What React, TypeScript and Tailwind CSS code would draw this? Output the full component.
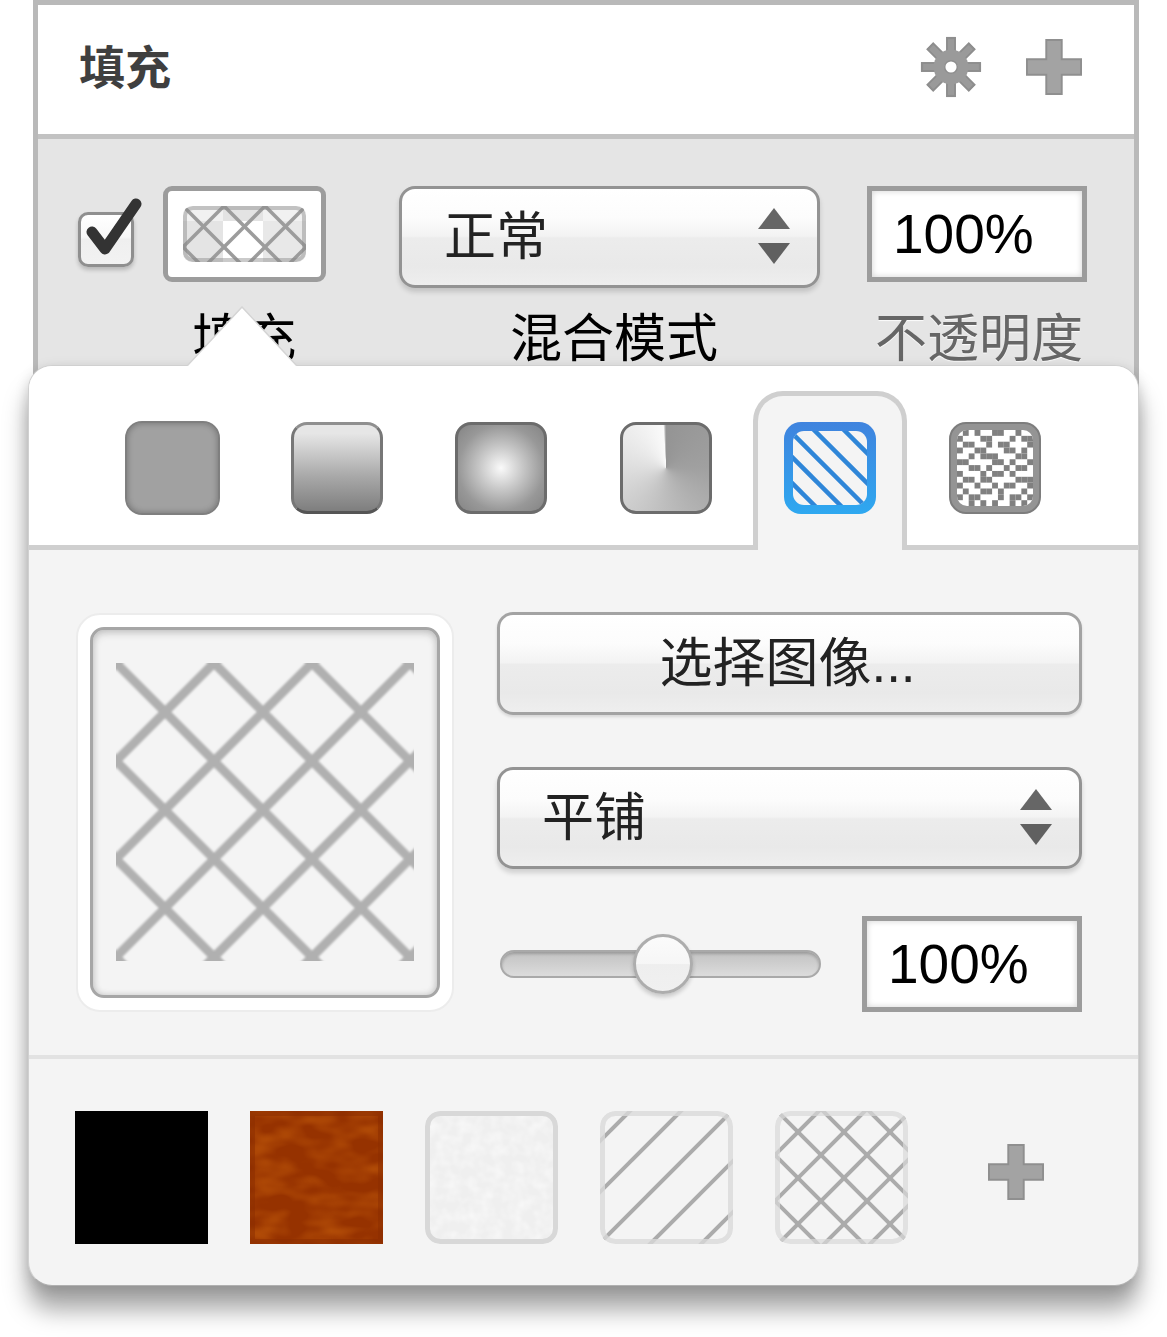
import React from "react"

const cjk = "font-['Liberation_Sans','Noto_Sans_CJK_SC',sans-serif]"
const gloss =
  "bg-[linear-gradient(#ffffff_0%,#fcfcfc_30%,#f3f3f3_49%,#ececec_51%,#e9e9e9_80%,#eeeeee_100%)]"

// 下面几块都是图案，用 svg 画
function Lines({ tile, width, height, w, color }: { tile: number; width: number; height: number; w: number; color: string }) {
  const items = []
  const max = Math.ceil((width + height) / tile) + 2
  for (let k = -max; k <= max; k++) {
    items.push(<line key={"a" + k} x1={tile * k - 10} y1={-10} x2={tile * k + height + 10} y2={height + 10} stroke={color} strokeWidth={w} />)
    items.push(<line key={"b" + k} x1={tile * k + 10} y1={-10} x2={tile * k - height - 10} y2={height + 10} stroke={color} strokeWidth={w} />)
  }
  return <>{items}</>
}

function Plus({ className }: { className?: string }) {
  return (
    <svg viewBox="0 0 58 58" className={className}>
      <path d="M21 1h16v20h20v16H37v20H21V37H1V21h20z" fill="#a3a3a3" stroke="#8f8f8f" strokeWidth="2" />
    </svg>
  )
}

function Gear() {
  const teeth = [0, 45, 90, 135, 180, 225, 270, 315]
  return (
    <svg viewBox="0 0 64 64" className="w-[62px] h-[62px]">
      {teeth.map((r) => (
        <rect key={r} x="28" y="2" width="8" height="60" fill="#9a9a9a" stroke="#8e8e8e" strokeWidth="2" transform={`rotate(${r} 32 32)`} />
      ))}
      <circle cx="32" cy="32" r="18" fill="#9a9a9a" />
      {teeth.map((r) => (
        <rect key={"i" + r} x="29" y="4" width="6" height="56" fill="#9a9a9a" transform={`rotate(${r} 32 32)`} />
      ))}
      <circle cx="32" cy="32" r="6.5" fill="#fff" stroke="#8e8e8e" strokeWidth="1.5" />
    </svg>
  )
}

function Arrows({ className }: { className?: string }) {
  return (
    <svg viewBox="0 0 32 56" className={className}>
      <path d="M16 0l16 21H0z" fill="#666" />
      <path d="M0 35h32L16 56z" fill="#606060" />
    </svg>
  )
}

function Select({ label, className, pad, arrow }: { label: string; className: string; pad: string; arrow: string }) {
  return (
    <div className={`relative flex items-center border-[3px] border-[#939393] rounded-[16px] shadow-[0_4px_5px_rgba(0,0,0,0.15)] text-[52px] text-[#222] ${gloss} ${className} ${pad}`}>
      <span className="leading-none">{label}</span>
      <Arrows className={`absolute w-[32px] h-[56px] top-[19px] ${arrow}`} />
    </div>
  )
}

function Percent({ className }: { className: string }) {
  return (
    <div className={`flex items-center border-[5px] border-[#9c9c9c] bg-white shadow-[inset_0_0_6px_rgba(0,0,0,0.18)] text-[55px] text-black pl-[21px] ${className}`}>
      100%
    </div>
  )
}

function SmallSwatch() {
  return (
    <svg viewBox="0 0 123 56" className="w-[123px] h-[56px]">
      <defs>
        <clipPath id="sw">
          <rect width="123" height="56" rx="9" />
        </clipPath>
      </defs>
      <g clipPath="url(#sw)">
        <rect width="123" height="56" fill="#ececec" />
        <rect x="0" y="0" width="40" height="15" fill="#f1f1f1" />
        <rect x="40" y="15" width="40" height="41" fill="#ffffff" />
        <rect x="0" y="15" width="40" height="41" fill="#e4e4e4" />
        <rect x="40" y="0" width="40" height="15" fill="#e3e3e3" />
        <rect x="80" y="0" width="43" height="15" fill="#f1f1f1" />
        <rect x="80" y="15" width="43" height="41" fill="#e8e8e8" />
        <g className="blur-[0.6px]">
          <Lines tile={41} width={123} height={56} w={3.5} color="#9c9c9c" />
        </g>
        <rect x="2" y="2" width="119" height="52" rx="8" fill="none" stroke="#8a8a8a" strokeOpacity="0.45" strokeWidth="4" />
      </g>
    </svg>
  )
}

const noise = [
  "0101001100100",
  "1000110001011",
  "0110010110001",
  "1001100011010",
  "0010111000110",
  "1100001101001",
  "0011010010110",
  "1000101101000",
  "0110110000111",
  "1001001011001",
  "0100110100010",
  "1011000101101",
  "0010101001010",
]

function TabIcons() {
  return (
    <div className="flex items-start gap-[72px] pl-[96px] pt-[55px] relative">
      <div className="w-[95px] h-[94px] rounded-[17px] border-2 border-[#7f7f7f] bg-[#a1a1a1] shadow-[inset_0_0_6px_rgba(0,0,0,0.3)]" />
      <div className="w-[92px] h-[92px] mt-[1px] -ml-[1px] rounded-[16px] border-[3px] border-t-[#8f8f8f] border-x-[#777] border-b-[#555] bg-[linear-gradient(#e6e6e6_10%,#a8a8a8_60%,#7e7e7e_100%)]" />
      <div className="w-[92px] h-[92px] mt-[1px] rounded-[16px] border-[3px] border-[#6c6c6c] bg-[radial-gradient(circle_at_50%_50%,#fafafa_0%,#c8c8c8_35%,#989898_70%,#848484_100%)]" />
      <div className="w-[92px] h-[92px] mt-[1px] ml-[1px] rounded-[16px] border-[3px] border-[#6c6c6c] bg-[conic-gradient(#949494_0%,#a0a0a0_25%,#bdbdbd_50%,#dedede_75%,#fafafa_99%,#949494_100%)]" />
      <svg viewBox="0 0 92 92" className="w-[92px] h-[92px] mt-[1px]">
        <defs>
          <linearGradient id="blue" x1="0" y1="0" x2="0" y2="1">
            <stop offset="0" stopColor="#3f83de" />
            <stop offset="1" stopColor="#2ea8f0" />
          </linearGradient>
          <clipPath id="bi">
            <rect x="9" y="9" width="74" height="74" rx="11" />
          </clipPath>
        </defs>
        <rect width="92" height="92" rx="17" fill="url(#blue)" />
        <rect x="9" y="9" width="74" height="74" rx="11" fill="#f4f4f4" />
        <g clipPath="url(#bi)" stroke="#2f86d8" strokeWidth="4.5">
          <line x1="-20" y1="33" x2="80" y2="133" />
          <line x1="-20" y1="7" x2="80" y2="107" />
          <line x1="-20" y1="-17" x2="80" y2="83" />
          <line x1="15" y1="-7" x2="115" y2="93" />
          <line x1="45" y1="-7" x2="145" y2="93" />
        </g>
      </svg>
      <svg viewBox="0 0 92 92" className="w-[92px] h-[92px] mt-[1px] ml-[1px]">
        <defs>
          <clipPath id="ni">
            <rect x="8" y="8" width="76" height="76" rx="10" />
          </clipPath>
        </defs>
        <rect x="1" y="1" width="90" height="90" rx="16" fill="#949494" stroke="#7d7d7d" strokeWidth="2" />
        <g clipPath="url(#ni)">
          <rect x="8" y="8" width="76" height="76" fill="#fff" />
          {noise.map((row, y) =>
            row.split("").map((c, x) =>
              c === "1" ? <rect key={x + "-" + y} x={8 + x * 5.85} y={8 + y * 5.85} width="5.85" height="5.85" fill="#808080" /> : null
            )
          )}
        </g>
      </svg>
    </div>
  )
}

function OrangeSwatch() {
  return (
    <svg viewBox="0 0 133 133" className="w-[133px] h-[133px]">
      <defs>
        <filter id="wood" x="0" y="0" width="100%" height="100%" colorInterpolationFilters="sRGB">
          <feTurbulence type="fractalNoise" baseFrequency="0.03 0.06" numOctaves="2" seed="7" />
          <feColorMatrix values="0 0 0 0 0.71  0 0 0 0 0.31  0 0 0 0 0.03  2.2 0 0 0 -0.85" />
        </filter>
      </defs>
      <rect width="133" height="133" fill="#963200" />
      <rect width="133" height="133" filter="url(#wood)" />
      <rect x="2.5" y="2.5" width="128" height="128" fill="none" stroke="#8a2c00" strokeOpacity="0.5" strokeWidth="5" />
    </svg>
  )
}

function PaperSwatch() {
  return (
    <svg viewBox="0 0 133 133" className="w-[133px] h-[133px]">
      <defs>
        <filter id="paper" x="0" y="0" width="100%" height="100%">
          <feTurbulence type="fractalNoise" baseFrequency="0.09" numOctaves="2" seed="3" />
          <feColorMatrix values="0 0 0 0 1  0 0 0 0 1  0 0 0 0 1  1 0 0 0 -0.35" />
        </filter>
        <clipPath id="pc">
          <rect width="133" height="133" rx="15" />
        </clipPath>
      </defs>
      <g clipPath="url(#pc)">
        <rect width="133" height="133" fill="#efefef" />
        <rect width="133" height="133" filter="url(#paper)" />
        <rect x="2.5" y="2.5" width="128" height="128" rx="13" fill="none" stroke="#d8d8d8" strokeWidth="5" />
      </g>
    </svg>
  )
}

function DiagSwatch() {
  return (
    <svg viewBox="0 0 133 133" className="w-[133px] h-[133px]">
      <defs>
        <clipPath id="dc">
          <rect width="133" height="133" rx="15" />
        </clipPath>
      </defs>
      <g clipPath="url(#dc)">
        <g stroke="#ababab" strokeWidth="4" className="blur-[0.5px]">
          {[30, 81, 132, 183, 234].map((s) => (
            <line key={s} x1={s + 5} y1={-5} x2={s - 140} y2={140} />
          ))}
        </g>
        <rect x="2.5" y="2.5" width="128" height="128" rx="13" fill="none" stroke="#d9d9d9" strokeOpacity="0.8" strokeWidth="5" />
      </g>
    </svg>
  )
}

function MeshSwatch() {
  return (
    <svg viewBox="0 0 133 133" className="w-[133px] h-[133px]">
      <defs>
        <clipPath id="mc">
          <rect width="133" height="133" rx="15" />
        </clipPath>
      </defs>
      <g clipPath="url(#mc)">
        <g transform="translate(0 -2)" className="blur-[0.5px]">
          <Lines tile={46} width={133} height={137} w={4} color="#ababab" />
        </g>
        <rect x="2.5" y="2.5" width="128" height="128" rx="13" fill="none" stroke="#d9d9d9" strokeOpacity="0.7" strokeWidth="5" />
      </g>
    </svg>
  )
}

export default function App() {
  return (
    <div className={`relative w-[1167px] h-[1337px] overflow-hidden bg-white ${cjk}`}>
      <div className="ml-[33px] w-[1106px] border-x-[5px] border-t-[5px] border-[#b9b9b9]">
        {/* 标题栏 */}
        <header className="h-[134px] border-b-[5px] border-[#c2c2c2] flex items-center pl-[41px] pr-[52px]">
          <h1 className="text-[46px] -mt-[4px] leading-none font-bold text-[#3f3f3f]">填充</h1>
          <div className="ml-auto -mt-[5px] flex items-center gap-[44px]">
            <Gear />
            <Plus className="w-[56px] h-[56px]" />
          </div>
        </header>

        {/* 图层行 */}
        <section className="bg-[#e5e5e5] h-[300px] pt-[47px] pl-[40px] flex items-start text-[52px] leading-none">
          <div className="relative w-[56px] h-[55px] mt-[26px] rounded-[10px] border-[3px] border-[#8f8f8f] shadow-[0_3px_4px_rgba(0,0,0,0.2)] bg-[linear-gradient(#ffffff_0%,#f8f8f8_45%,#efefef_50%,#f2f2f2_100%)]">
            <svg viewBox="0 0 70 70" className="absolute -left-[3px] -top-[17px] w-[70px] h-[70px] overflow-visible">
              <path d="M14 34L27 51L58 6" fill="none" stroke="#333" strokeWidth="11" strokeLinecap="round" strokeLinejoin="round" />
            </svg>
          </div>
          <div className="ml-[29px] flex flex-col items-center">
            <div className="w-[163px] h-[96px] border-[5px] border-[#9c9c9c] rounded-[9px] bg-white flex items-center justify-center">
              <SmallSwatch />
            </div>
            <span className="mt-[31px] text-black">填充</span>
          </div>
          <div className="ml-[73px] flex flex-col items-center">
            <Select label="正常" className="w-[421px] h-[102px]" pad="pl-[42px]" arrow="right-[27px]" />
            <span className="mt-[25px] pl-[9px] text-black">混合模式</span>
          </div>
          <div className="ml-[47px] flex flex-col items-center">
            <Percent className="w-[220px] h-[96px]" />
            <span className="mt-[31px] pl-[4px] text-[#666] [text-shadow:0_1px_1px_rgba(255,255,255,0.9)]">不透明度</span>
          </div>
        </section>
      </div>

      {/* 弹出面板 */}
      <div className="absolute left-[28px] top-[365px] w-[1111px] h-[921px] rounded-[24px] border border-[#d0d0d0] border-b-[#b0b0b0] bg-[#f4f4f4] shadow-[0_24px_24px_rgba(0,0,0,0.35),0_4px_14px_rgba(0,0,0,0.15)]">
        <svg viewBox="0 0 110 62" className="absolute left-[158px] -top-[60px] w-[110px] h-[62px]">
          <path d="M0 60L55 1L110 60V62H0z" fill="#fff" />
          <path d="M0 60L55 1L110 60" fill="none" stroke="#d4d4d4" strokeWidth="1.5" />
        </svg>

        <div className="h-[184px] bg-white rounded-t-[23px] border-b-[5px] border-[#cfcfcf] relative">
          <div className="absolute left-[724px] top-[25px] w-[154px] h-[159px] rounded-t-[30px] border-x-[5px] border-t-[5px] border-[#cfcfcf] bg-[#f4f4f4]" />
          <TabIcons />
        </div>

        <div className="h-[505px] flex items-start pl-[47px]">
          <div className="mt-[63px] w-[378px] h-[399px] rounded-[24px] border-2 border-[#ececec] bg-white p-[12px]">
            <div className="w-full h-full rounded-[14px] border-[3px] border-[#a6a6a6] bg-[#f4f4f4] shadow-[inset_0_3px_8px_rgba(0,0,0,0.16),inset_0_0_7px_rgba(0,0,0,0.12)] flex items-center justify-center">
              <svg viewBox="0 0 298 298" className="w-[298px] h-[298px] -mt-[1px]">
                <defs>
                  <clipPath id="well">
                    <rect width="298" height="298" />
                  </clipPath>
                </defs>
                <g clipPath="url(#well)">
                  <g className="blur-[1px]">
                    <Lines tile={98} width={298} height={298} w={9} color="#b0b0b0" />
                  </g>
                </g>
              </svg>
            </div>
          </div>
          <div className="ml-[43px] mt-[62px] w-[585px] flex flex-col">
            <div className={`h-[103px] flex items-center justify-center rounded-[16px] border-[3px] border-[#a3a3a3] shadow-[0_2px_3px_rgba(0,0,0,0.12)] text-[53px] leading-none text-[#222] pr-[4px] ${gloss}`}>
              选择图像...
            </div>
            <Select label="平铺" className="mt-[52px] w-[585px] h-[102px]" pad="pl-[42px]" arrow="right-[27px]" />
            <div className="mt-[47px] flex items-center">
              <div className="relative ml-[3px] w-[321px] h-[28px] rounded-full border-2 border-[#a9a9a9] bg-[linear-gradient(#c2c2c2,#dcdcdc)] shadow-[inset_0_2px_3px_rgba(0,0,0,0.2)]">
                <div className="absolute left-[131px] -top-[18px] w-[60px] h-[60px] rounded-full border-[3px] border-[#adadad] shadow-[0_3px_4px_rgba(0,0,0,0.18)] bg-[linear-gradient(#fbfbfb_0%,#f6f6f6_50%,#eeeeee_51%,#f0f0f0_100%)]" />
              </div>
              <Percent className="ml-[41px] w-[220px] h-[96px]" />
            </div>
          </div>
        </div>

        <div className="border-t-[4px] border-[#e2e2e2] pt-[52px] pl-[46px] flex items-start gap-[42px]">
          <div className="w-[133px] h-[133px] bg-black" />
          <OrangeSwatch />
          <PaperSwatch />
          <DiagSwatch />
          <MeshSwatch />
          <Plus className="w-[56px] h-[56px] ml-[38px] mt-[33px]" />
        </div>
      </div>
    </div>
  )
}
